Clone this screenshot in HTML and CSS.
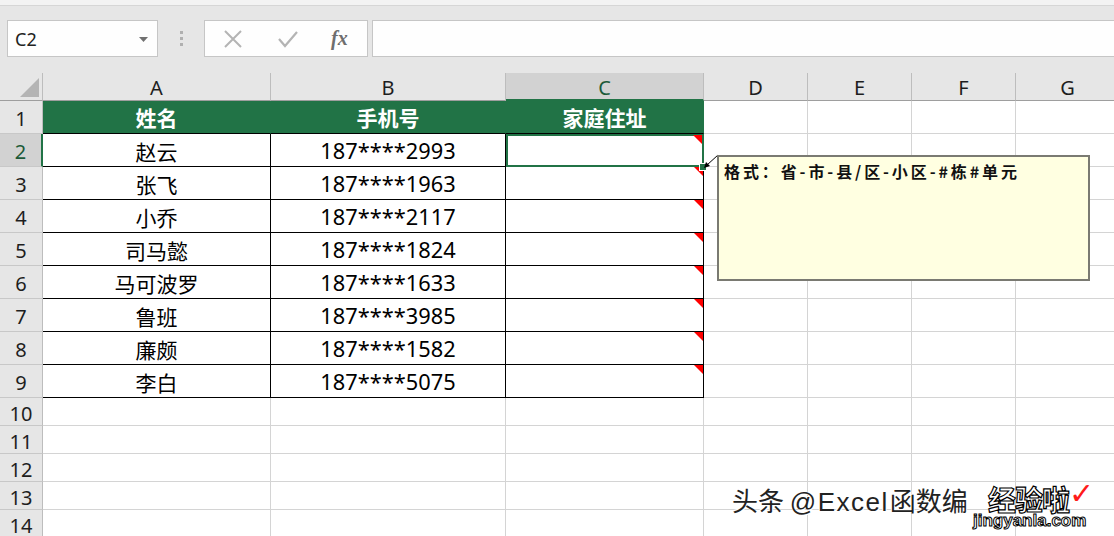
FILE: index.html
```html
<!DOCTYPE html>
<html lang="zh-CN">
<head>
<meta charset="utf-8">
<title>Excel</title>
<link rel="stylesheet" href="styles.css">
</head>
<body>
<div class="app">
  <div class="ribbon-edge"></div>
  <div class="formula-bar">
    <div class="namebox">
      <span class="name">C2</span>
      <svg class="caret" width="9" height="5" viewBox="0 0 9 5"><path d="M0 0h9L4.5 5z" fill="#707070"/></svg>
    </div>
    <div class="grip"><i></i><i></i><i></i></div>
    <div class="fbuttons">
      <svg width="20" height="20" viewBox="0 0 20 20"><path d="M2 2L18 18M18 2L2 18" stroke="#b4b4b4" stroke-width="2" fill="none"/></svg>
      <svg width="22" height="20" viewBox="0 0 22 20"><path d="M2 10L8 17L20 3" stroke="#b4b4b4" stroke-width="2.2" fill="none"/></svg>
      <span class="fx">fx</span>
    </div>
    <div class="finput"></div>
  </div>

  <div class="sheet">
    <div class="grid">
      <div class="corner"><span class="tri"></span></div>
      <div class="ch">A</div>
      <div class="ch">B</div>
      <div class="ch sel">C</div>
      <div class="ch">D</div>
      <div class="ch">E</div>
      <div class="ch">F</div>
      <div class="ch">G</div>

      <div class="rh">1</div>
      <div class="c hd la">姓名</div>
      <div class="c hd">手机号</div>
      <div class="c hd">家庭住址</div>
      <div class="c"></div><div class="c"></div><div class="c"></div><div class="c"></div>

      <div class="rh sel">2</div>
      <div class="c t la">赵云</div>
      <div class="c t num">187****2993</div>
      <div class="c t cm active"></div>
      <div class="c"></div><div class="c"></div><div class="c"></div><div class="c"></div>

      <div class="rh">3</div>
      <div class="c t la">张飞</div>
      <div class="c t num">187****1963</div>
      <div class="c t cm"></div>
      <div class="c"></div><div class="c"></div><div class="c"></div><div class="c"></div>

      <div class="rh">4</div>
      <div class="c t la">小乔</div>
      <div class="c t num">187****2117</div>
      <div class="c t cm"></div>
      <div class="c"></div><div class="c"></div><div class="c"></div><div class="c"></div>

      <div class="rh">5</div>
      <div class="c t la">司马懿</div>
      <div class="c t num">187****1824</div>
      <div class="c t cm"></div>
      <div class="c"></div><div class="c"></div><div class="c"></div><div class="c"></div>

      <div class="rh">6</div>
      <div class="c t la">马可波罗</div>
      <div class="c t num">187****1633</div>
      <div class="c t cm"></div>
      <div class="c"></div><div class="c"></div><div class="c"></div><div class="c"></div>

      <div class="rh">7</div>
      <div class="c t la">鲁班</div>
      <div class="c t num">187****3985</div>
      <div class="c t cm"></div>
      <div class="c"></div><div class="c"></div><div class="c"></div><div class="c"></div>

      <div class="rh">8</div>
      <div class="c t la">廉颇</div>
      <div class="c t num">187****1582</div>
      <div class="c t cm"></div>
      <div class="c"></div><div class="c"></div><div class="c"></div><div class="c"></div>

      <div class="rh">9</div>
      <div class="c t la">李白</div>
      <div class="c t num">187****5075</div>
      <div class="c t cm"></div>
      <div class="c"></div><div class="c"></div><div class="c"></div><div class="c"></div>

      <div class="rh">10</div>
      <div class="c"></div><div class="c"></div><div class="c"></div><div class="c"></div><div class="c"></div><div class="c"></div><div class="c"></div>
      <div class="rh">11</div>
      <div class="c"></div><div class="c"></div><div class="c"></div><div class="c"></div><div class="c"></div><div class="c"></div><div class="c"></div>
      <div class="rh">12</div>
      <div class="c"></div><div class="c"></div><div class="c"></div><div class="c"></div><div class="c"></div><div class="c"></div><div class="c"></div>
      <div class="rh">13</div>
      <div class="c"></div><div class="c"></div><div class="c"></div><div class="c"></div><div class="c"></div><div class="c"></div><div class="c"></div>
      <div class="rh">14</div>
      <div class="c"></div><div class="c"></div><div class="c"></div><div class="c"></div><div class="c"></div><div class="c"></div><div class="c"></div>
    </div>

    <div class="handle"></div>
    <svg class="pointer" width="20" height="16" viewBox="0 0 20 16">
      <path d="M15 1L4 11" stroke="#000" stroke-width="1" fill="none"/>
      <path d="M1 14L3 8L7 12z" fill="#000"/>
    </svg>
    <div class="comment">格式：省-市-县/区-小区-#栋#单元</div>

    <div class="watermark">
      <span class="wm-text">头条 <span class="wm-lat">@Excel</span>函数编</span>
      <span class="wm-logo">经验啦</span>
      <span class="wm-check">✓</span>
      <span class="wm-url">jingyanla.com</span>
    </div>
  </div>
</div>
</body>
</html>
```

FILE: styles.css
```css
* { box-sizing: border-box; }
html, body { margin: 0; padding: 0; }
body {
  width: 1114px;
  height: 536px;
  overflow: hidden;
  background: #ffffff;
  font-family: "Noto Sans", "Noto Sans CJK SC", sans-serif;
}
.app { width: 1114px; height: 536px; overflow: hidden; background: #e6e6e6; }

.ribbon-edge {
  height: 6px;
  background: #f3f3f3;
  border-bottom: 1px solid #d6d6d6;
}

.formula-bar {
  height: 67px;
  display: flex;
  align-items: flex-start;
  padding: 14px 0 0 7px;
}
.namebox {
  width: 151px;
  height: 37px;
  background: #fefefe;
  border: 1px solid #c6c6c6;
  display: flex;
  align-items: center;
  justify-content: space-between;
  padding: 0 9px 0 7px;
}
.name { font-family: "Noto Sans", sans-serif; font-size: 18px; color: #222; }
.caret { margin-top: 1px; }
.grip {
  width: 46px;
  height: 37px;
  display: flex;
  flex-direction: column;
  align-items: center;
  justify-content: center;
  gap: 3px;
}
.grip i { width: 3px; height: 3px; background: #b0b0b0; display: block; }
.fbuttons {
  width: 164px;
  height: 37px;
  background: #fefefe;
  border: 1px solid #c6c6c6;
  display: flex;
  align-items: center;
  padding-left: 18px;
  gap: 34px;
}
.fx {
  font-family: "Liberation Serif", serif;
  font-style: italic;
  font-weight: bold;
  font-size: 20px;
  color: #6e6e6e;
  margin-left: -2px;
}
.finput {
  margin-left: 4px;
  flex: 1;
  height: 37px;
  background: #fefefe;
  border: 1px solid #c6c6c6;
  border-right: none;
}

.sheet { position: relative; background: #fff; height: 463px; overflow: hidden; }
.grid {
  display: grid;
  grid-template-columns: 43px 228px 235px 198px 104px 104px 104px 104px;
  grid-template-rows: 28px repeat(9, 33px) repeat(5, 28px);
  width: 1120px;
}
.corner {
  background: #e6e6e6;
  border-right: 1px solid #bdbdbd;
  border-bottom: 1px solid #9e9e9e;
  position: relative;
}
.corner .tri {
  position: absolute;
  right: 3px;
  bottom: 3px;
  width: 0; height: 0;
  border-left: 19px solid transparent;
  border-bottom: 19px solid #b4b4b4;
}
.ch {
  background: #e6e6e6;
  border-right: 1px solid #bdbdbd;
  border-bottom: 1px solid #9e9e9e;
  display: flex;
  align-items: center;
  justify-content: center;
  font-size: 20px;
  color: #1e1e1e;
  padding-top: 2px;
}
.ch.sel { background: #d2d2d2; color: #1c5a38; border-bottom: 2px solid #217346; }
.rh {
  background: #e6e6e6;
  border-right: 1px solid #bdbdbd;
  border-bottom: 1px solid #c8c8c8;
  display: flex;
  align-items: center;
  justify-content: center;
  font-size: 20px;
  color: #1e1e1e;
  padding-top: 3px;
}
.rh.sel { background: #d2d2d2; color: #1c5a38; border-right: 2px solid #217346; }
.c {
  border-right: 1px solid #d4d4d4;
  border-bottom: 1px solid #d4d4d4;
  position: relative;
}
.c.hd, .c.t {
  display: flex;
  align-items: center;
  justify-content: center;
  font-family: "Noto Sans CJK SC", sans-serif;
  font-size: 21px;
  border-right: 1px solid #000;
  border-bottom: 1px solid #000;
}
.c.hd {
  background: #217346;
  color: #fff;
  font-weight: bold;
  border-right-color: #217346;
  border-bottom-color: #000;
}
.c.t { color: #000; padding-top: 1px; }
.c.t.num { font-family: "Noto Sans", sans-serif; font-size: 21.8px; padding-top: 0; }
.c.cm::after {
  content: "";
  position: absolute;
  top: 0;
  right: 0;
  width: 0; height: 0;
  border-left: 9px solid transparent;
  border-top: 9px solid #ff0000;
}
.c.active { outline: 2px solid #217346; outline-offset: -2px; }
.c.active::after { top: 1px; right: 1px; }

.handle {
  position: absolute;
  left: 699px;
  top: 90px;
  width: 8px;
  height: 8px;
  background: #217346;
  border: 1px solid #fff;
}
.pointer { position: absolute; left: 703px; top: 81px; }
.comment {
  position: absolute;
  left: 717px;
  top: 82px;
  width: 373px;
  height: 126px;
  background: #ffffe1;
  border: 2px solid #7a7a72;
  padding: 2px 0 0 5px;
  font-family: "Noto Sans CJK SC", sans-serif;
  font-weight: bold;
  font-size: 16px;
  letter-spacing: 2.9px;
  color: #111;
  line-height: 24px;
  white-space: nowrap;
}

.watermark {
  position: absolute;
  left: 732px;
  top: 409px;
  width: 370px;
  height: 60px;
}
.wm-text {
  position: absolute;
  left: 0;
  top: 0;
  font-family: "Noto Sans CJK SC", sans-serif;
  font-size: 26px;
  line-height: 36px;
  color: #222;
  white-space: nowrap;
  text-shadow: 1px 1px 0 #fff, -1px -1px 0 #fff;
}
.wm-lat { font-family: "Liberation Sans", sans-serif; letter-spacing: 1.5px; margin-right: 1px; }
.wm-logo {
  position: absolute;
  left: 256px;
  top: -1px;
  font-family: "Noto Sans CJK SC", sans-serif;
  font-weight: bold;
  font-size: 28px;
  line-height: 36px;
  color: #fff;
  -webkit-text-stroke: 1.2px #000;
  letter-spacing: -1px;
  white-space: nowrap;
}
.wm-check {
  position: absolute;
  left: 337px;
  top: -5px;
  font-size: 30px;
  line-height: 34px;
  font-weight: bold;
  color: #ff1a1a;
  font-family: "DejaVu Sans", sans-serif;
}
.wm-url {
  position: absolute;
  left: 241px;
  top: 29px;
  font-family: "Liberation Sans", sans-serif;
  font-weight: bold;
  font-size: 17px;
  line-height: 20px;
  color: #fff;
  -webkit-text-stroke: 1px #000;
  white-space: nowrap;
}
```
